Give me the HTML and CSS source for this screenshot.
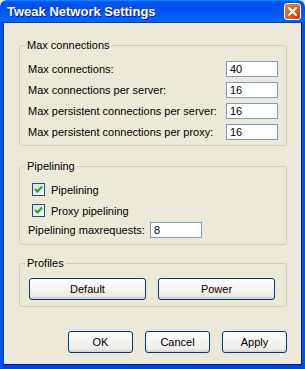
FILE: index.html
```html
<!DOCTYPE html>
<html lang="en">
<head>
  <meta charset="UTF-8" />
  <title>Tweak Network Settings</title>
  <link rel="stylesheet" href="styles.css">
</head>
<body>
  <div class="window">
    <div class="titlebar">
      <span class="title">Tweak Network Settings</span>
      <button class="close" aria-label="Close">
        <svg width="9" height="9" viewBox="0 0 9 9">
          <path d="M1 1 L8 8 M8 1 L1 8" stroke="#fff" stroke-width="2" stroke-linecap="square"/>
        </svg>
      </button>
    </div>

    <div class="client">
      <fieldset class="group group-max">
        <legend>Max connections</legend>
        <div class="row">
          <label>Max connections:</label>
          <input class="field" type="text" value="40">
        </div>
        <div class="row">
          <label>Max connections per server:</label>
          <input class="field" type="text" value="16">
        </div>
        <div class="row">
          <label>Max persistent connections per server:</label>
          <input class="field" type="text" value="16">
        </div>
        <div class="row">
          <label>Max persistent connections per proxy:</label>
          <input class="field" type="text" value="16">
        </div>
      </fieldset>

      <fieldset class="group group-pipe">
        <legend>Pipelining</legend>
        <label class="check"><span class="box"><svg width="9" height="9" viewBox="0 0 9 9"><path d="M1 4 L3.5 6.5 L8 1.5" fill="none" stroke="#21a121" stroke-width="2"/></svg></span>Pipelining</label>
        <label class="check"><span class="box"><svg width="9" height="9" viewBox="0 0 9 9"><path d="M1 4 L3.5 6.5 L8 1.5" fill="none" stroke="#21a121" stroke-width="2"/></svg></span>Proxy pipelining</label>
        <div class="row row-short">
          <label>Pipelining maxrequests:</label>
          <input class="field" type="text" value="8">
        </div>
      </fieldset>

      <fieldset class="group group-profiles">
        <legend>Profiles</legend>
        <div class="profile-buttons">
          <button class="btn btn-wide">Default</button>
          <button class="btn btn-wide">Power</button>
        </div>
      </fieldset>

      <div class="dialog-buttons">
        <button class="btn">OK</button>
        <button class="btn">Cancel</button>
        <button class="btn">Apply</button>
      </div>
    </div>
  </div>
</body>
</html>
```

FILE: styles.css
```css
* {
  margin: 0;
  padding: 0;
  box-sizing: border-box;
}

body {
  font-family: 'Liberation Sans', Arial, sans-serif;
  font-size: 11px;
  color: #000;
  background: #ece9d8;
}

.window {
  width: 305px;
  height: 369px;
  display: flex;
  flex-direction: column;
}

/* Title bar */
.titlebar {
  height: 23px;
  flex: none;
  display: flex;
  align-items: center;
  justify-content: space-between;
  padding: 0 4px 0 7px;
  border-radius: 7px 7px 0 0;
  background: linear-gradient(180deg, #0997ff, #0053ee 8%, #0050ee 40%, #0066ff 88%, #0066ff 93%, #005bff 95%, #003dd7 96%, #003dd7);
}

.title {
  color: #fff;
  font-weight: bold;
  font-size: 13px;
  text-shadow: 1px 1px #0f1089;
}

.close {
  width: 17px;
  height: 17px;
  border: 1px solid #fff;
  border-radius: 3px;
  background: radial-gradient(circle at 85% 85%, #cc4600, #dc6527 55%, #cd7546 70%, #e5a01c);
  display: flex;
  align-items: center;
  justify-content: center;
}

/* Client area */
.client {
  flex: 1;
  background: #ece9d8;
  padding: 16px 15px 0 16px;
  border-left: 3px solid #0055e5;
  border-right: 3px solid #0055e5;
  border-bottom: 4px solid #0047d5;
  box-shadow: inset 1px 0 #0831d9, inset -1px 0 #00138c, inset 0 -1px #00138c;
}

.group {
  border: 1px solid #d0d0bf;
  border-radius: 3px;
  padding: 0 8px 5px 8px;
}

.group legend {
  line-height: 12px;
  padding: 0 2px;
  margin-left: -3px;
}

.group-max {
  padding-top: 10px;
  display: flex;
  flex-direction: column;
  gap: 5px;
}

.row {
  display: flex;
  align-items: center;
  justify-content: space-between;
  height: 16px;
}

.row-short {
  justify-content: flex-start;
}

.row-short label {
  width: 122px;
}

.field {
  width: 52px;
  height: 16px;
  border: 1px solid #7f9db9;
  background: #fff;
  font: inherit;
  padding: 0 3px;
  outline: none;
}

.group-pipe {
  margin-top: 14px;
  padding-top: 11px;
  padding-bottom: 6px;
}

.check {
  display: flex;
  align-items: center;
  height: 13px;
  margin: 0 0 8px 4px;
}

.check + .row {
  margin-top: -3px;
}

.box {
  width: 13px;
  height: 13px;
  border: 1px solid #1c5180;
  background: linear-gradient(135deg, #dcdcd7, #fff);
  display: flex;
  align-items: center;
  justify-content: center;
  margin-right: 6px;
}

.group-profiles {
  margin-top: 12px;
  padding: 9px 11px 6px 9px;
}

.group-profiles legend {
  margin-left: -4px;
}

.profile-buttons {
  display: flex;
  gap: 12px;
}

.btn {
  width: 65px;
  height: 22px;
  border: 1px solid #003c74;
  border-radius: 3px;
  background: linear-gradient(180deg, #fff, #ecebe6 86%, #d6d0c5);
  font: inherit;
  color: #000;
}

.btn-wide {
  width: 117px;
}

.dialog-buttons {
  display: flex;
  justify-content: flex-end;
  gap: 12px;
  margin-top: 24px;
}
```
